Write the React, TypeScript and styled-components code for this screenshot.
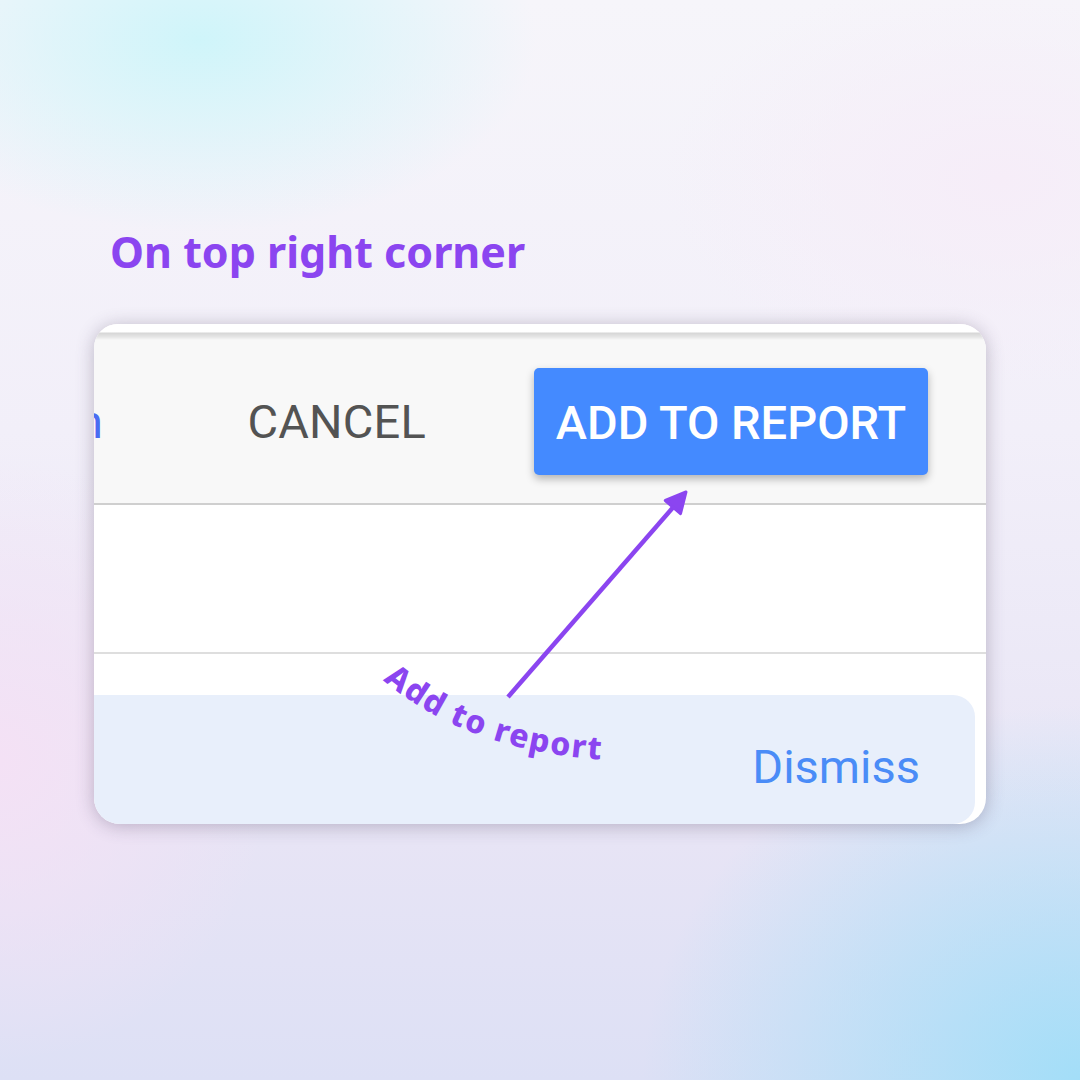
import styled, { createGlobalStyle } from "styled-components";

const purple = "#8b45f0";

const GlobalStyle = createGlobalStyle`
  html, body {
    margin: 0;
    padding: 0;
  }
  body {
    width: 1080px;
    height: 1080px;
    overflow: hidden;
    font-family: "Roboto", "Liberation Sans", sans-serif;
  }
`;

const Page = styled.div`
  position: relative;
  width: 1080px;
  height: 1080px;
  box-sizing: border-box;
  padding-top: 226px;
  background:
    radial-gradient(ellipse 420px 240px at 200px 40px, rgba(205, 245, 250, 0.95), rgba(205, 245, 250, 0) 80%),
    radial-gradient(ellipse 560px 480px at 1080px 1080px, #a3def8, rgba(163, 222, 248, 0) 78%),
    radial-gradient(ellipse 380px 420px at 0px 760px, #f4e1f5, rgba(244, 225, 245, 0) 72%),
    radial-gradient(ellipse 420px 260px at 1000px 180px, #f6edf8, rgba(246, 237, 248, 0) 80%),
    linear-gradient(180deg, #f6f5fa 0%, #f2eff9 40%, #e7e4f5 78%, #dde0f5 100%);
`;

const Title = styled.h1`
  margin: 0 0 46px 110px;
  font-family: "Noto Sans", "Open Sans", sans-serif;
  font-weight: 700;
  font-size: 43px;
  line-height: 52px;
  color: ${purple};
`;

const Card = styled.div`
  margin-left: 94px;
  width: 892px;
  height: 500px;
  border-radius: 24px 26px 26px 26px;
  overflow: hidden;
  background: #ffffff;
  display: flex;
  flex-direction: column;
  box-shadow: 0 2px 18px rgba(70, 60, 90, 0.32);
`;

const Header = styled.div`
  height: 164px;
  padding-top: 15px;
  display: flex;
  align-items: center;
  background: linear-gradient(
    180deg,
    #ffffff 0px,
    #ffffff 8px,
    #d6d6d6 9px,
    #e6e6e6 13px,
    #f8f8f8 16px,
    #f8f8f8 100%
  );
  border-bottom: 2px solid #cfcfcf;
  box-shadow: 0 2px 1px #e6e6e6;
`;

const CutLetter = styled.span`
  margin-left: -17px;
  font-size: 47px;
  color: #4a6cf2;
`;

const Actions = styled.div`
  margin-left: auto;
  padding-right: 58px;
  display: flex;
  align-items: center;
  gap: 108px;
`;

const TextButton = styled.span`
  font-size: 47px;
  font-weight: 400;
  color: #535353;
  letter-spacing: 0.2px;
`;

const PrimaryButton = styled.span`
  width: 394px;
  height: 107px;
  box-sizing: border-box;
  display: flex;
  align-items: center;
  justify-content: center;
  background: #448aff;
  border-radius: 5px;
  box-shadow: 0 4px 9px rgba(0, 0, 0, 0.28);
  color: #ffffff;
  font-size: 47px;
  font-weight: 500;
  padding-top: 2px;
`;

const Row = styled.div<{ $height: number; $divider?: boolean }>`
  height: ${(p) => p.$height}px;
  flex-shrink: 0;
  background: #ffffff;
  border-bottom: ${(p) => (p.$divider ? "2px solid #dedede" : "none")};
`;

const Banner = styled.div`
  flex: 1;
  margin-right: 11px;
  margin-left: -30px;
  background: #e8effb;
  border-radius: 0 22px 22px 0;
  display: flex;
  justify-content: flex-end;
  align-items: flex-start;
  padding: 44px 55px 0 0;
`;

const BannerLink = styled.span`
  font-size: 47px;
  line-height: 56px;
  color: #4a8cf7;
`;

const Overlay = styled.svg`
  position: absolute;
  left: 0;
  top: 0;
  pointer-events: none;
`;

const Note = styled.text`
  font-family: "Noto Sans", "Open Sans", sans-serif;
  font-weight: 800;
  font-size: 32px;
  fill: ${purple};
`;

const AnnotationArrow = () => (
  <Overlay width={1080} height={1080} viewBox="0 0 1080 1080">
    <defs>
      <path id="noteCurve" d="M 383 680 Q 468 752 608 760" fill="none" />
    </defs>
    <line x1={508} y1={697} x2={676} y2={504} stroke={purple} strokeWidth={4.5} />
    <polygon
      points="686,492 680.5,513.7 665.3,500.5"
      fill={purple}
      stroke={purple}
      strokeWidth={3}
      strokeLinejoin="round"
    />
    <Note>
      <textPath href="#noteCurve" textLength={236} lengthAdjust="spacing">
        Add to report
      </textPath>
    </Note>
  </Overlay>
);

const App = () => {
  return (
    <Page>
      <GlobalStyle />
      <Title>On top right corner</Title>
      <Card>
        <Header>
          <CutLetter>n</CutLetter>
          <Actions>
            <TextButton>CANCEL</TextButton>
            <PrimaryButton>ADD TO REPORT</PrimaryButton>
          </Actions>
        </Header>
        <Row $height={147} $divider />
        <Row $height={41} />
        <Banner>
          <BannerLink>Dismiss</BannerLink>
        </Banner>
      </Card>
      <AnnotationArrow />
    </Page>
  );
};

export default App;
